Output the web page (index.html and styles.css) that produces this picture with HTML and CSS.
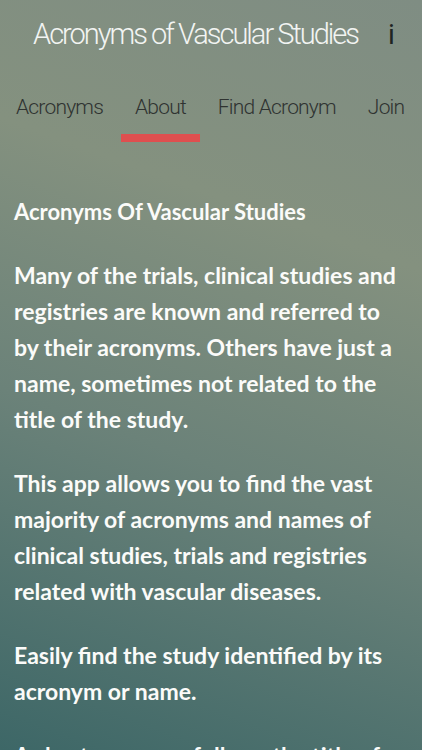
FILE: index.html
```html
<!DOCTYPE html>
<html lang="en">
<head>
    <meta charset="UTF-8">
    <meta name="viewport" content="width=device-width, initial-scale=1.0">
    <title>Acronyms of Vascular Studies</title>
    <link rel="stylesheet" href="styles.css">
</head>
<body>
    <header class="topbar">
        <h1 class="app-title">Acronyms of Vascular Studies</h1>
        <span class="info-btn">i</span>
    </header>

    <nav class="tabs">
        <a class="tab">Acronyms</a>
        <a class="tab active">About</a>
        <a class="tab">Find Acronym</a>
        <a class="tab">Join</a>
    </nav>

    <main class="about">
        <h2 class="about-title">Acronyms Of Vascular Studies</h2>
        <p>Many of the trials, clinical studies and registries are known and referred to by their acronyms. Others have just a name, sometimes not related to the title of the study.</p>
        <p>This app allows you to find the vast majority of acronyms and names of clinical studies, trials and registries related with vascular diseases.</p>
        <p>Easily find the study identified by its acronym or name.</p>
        <p>A short summary follows the title of each study, with a link to the original publication.</p>
    </main>
</body>
</html>
```

FILE: styles.css
```css
html, body {
    margin: 0;
    height: 100%;
}
body {
    width: 422px;
    height: 750px;
    overflow: hidden;
    background: linear-gradient(200deg, #7f8d83 0%, #84917f 30%, #6b8279 60%, #3d6767 100%);
    font-family: "Lato", "Open Sans", sans-serif;
}
.topbar {
    display: flex;
    align-items: center;
    padding: 14px 0 0 33px;
    height: 40px;
}
.app-title {
    margin: 0;
    font-family: "Roboto", "Liberation Sans", sans-serif;
    font-weight: 300;
    font-size: 29px;
    letter-spacing: -2px;
    color: #f2f4f2;
    flex: 1;
    white-space: nowrap;
}
.info-btn {
    width: 34px;
    font-family: "Roboto", sans-serif;
    font-weight: 400;
    font-size: 28px;
    color: #1f2422;
}
.tabs {
    display: flex;
    align-items: center;
    gap: 32px;
    padding: 40px 0 0 16px;
}
.tab {
    position: relative;
    flex-shrink: 0;
    white-space: nowrap;
    font-family: "Roboto", "Liberation Sans", sans-serif;
    font-weight: 300;
    font-size: 21px;
    letter-spacing: -0.8px;
    color: #2f3331;
    line-height: 27px;
    padding-bottom: 21px;
}
.tab.active::after {
    content: "";
    position: absolute;
    left: -14px;
    right: -14px;
    bottom: 0;
    height: 8px;
    background: #df4f4f;
}
.about {
    padding: 55px 14px 0 14px;
    color: #fbfbf9;
}
.about-title {
    margin: 0 0 30px 0;
    font-size: 22px;
    font-weight: 700;
    line-height: 30px;
}
.about p {
    margin: 0 0 28px 0;
    font-size: 23px;
    font-weight: 700;
    line-height: 36px;
}
```
